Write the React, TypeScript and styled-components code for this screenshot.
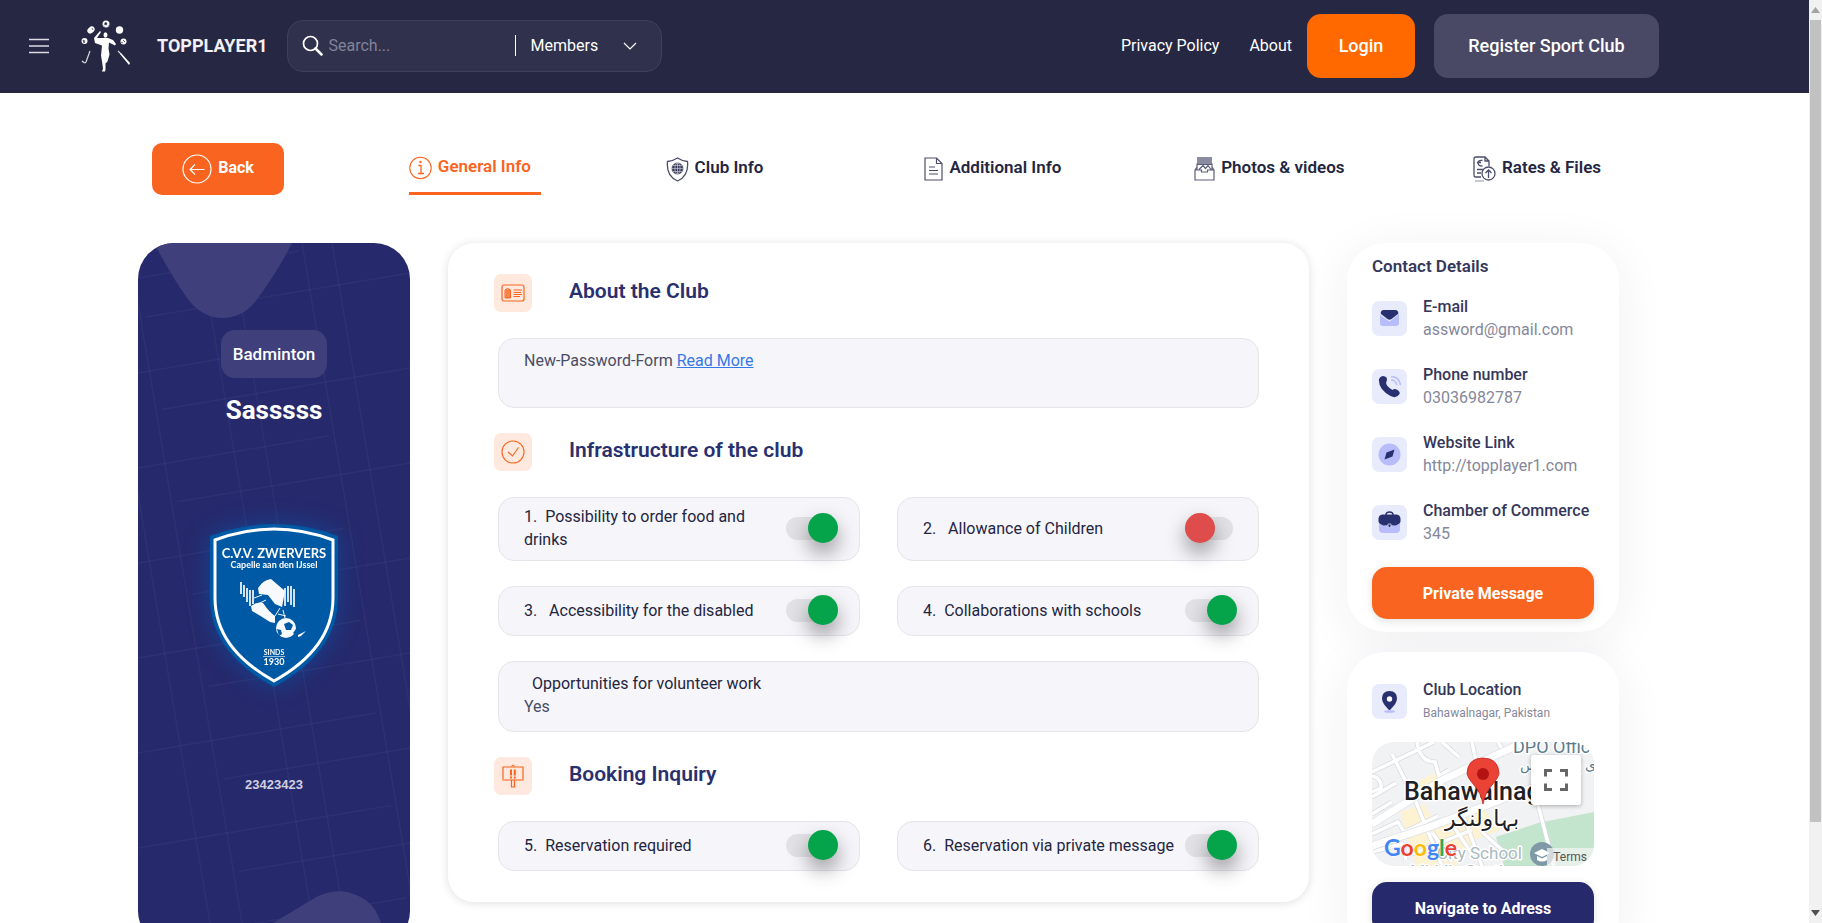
import React, { useId, useState } from "react";
import styled, { createGlobalStyle } from "styled-components";

const GlobalStyle = createGlobalStyle`
  *, *::before, *::after { box-sizing: border-box; }
  body {
    margin: 0;
    background: #fff;
    color: #24253f;
    font-family: Roboto, "Liberation Sans", sans-serif;
    font-size: 16px;
    line-height: 23px;
  }
  button, input, select { font: inherit; color: inherit; }
  h1, h2, h3, p, ul { margin: 0; padding: 0; }
  svg { display: block; flex: none; }
`;

const orange = "#f96420";
const navy = "#26296c";

/* ---------- Frame ---------- */

const Frame = styled.div`
  display: grid;
  grid-template-columns: minmax(0, 1fr) 13px;
  height: 100vh;
`;

const Page = styled.div`
  overflow-x: hidden;
  overflow-y: auto;
  scrollbar-width: none;
`;

const Rail = styled.div`
  display: flex;
  flex-direction: column;
  align-items: center;
  overflow: hidden;
  padding: 6px 0;
  background: #f1f1f1;
`;

const RailThumb = styled.div`
  flex: 0 0 88%;
  width: 11px;
  margin: 6px 0 auto;
  background: #c1c1c1;
`;

/* ---------- Header ---------- */

const Header = styled.header`
  display: flex;
  align-items: center;
  height: 93px;
  padding: 0 150px 2px 28px;
  background: #262743;
  color: #fff;
`;

const IconButton = styled.button`
  display: flex;
  padding: 0;
  border: 0;
  background: none;
  cursor: pointer;
`;

const Brand = styled.a`
  display: flex;
  align-items: center;
  gap: 26px;
  margin: 0 19px 0 31px;
  color: #f3f0f6;
  font-size: 18px;
  font-weight: 700;
  text-decoration: none;
`;

const SearchBox = styled.form`
  display: flex;
  align-items: center;
  width: 375px;
  height: 52px;
  padding: 0 24px 0 14px;
  border: 1px solid #3f405a;
  border-radius: 16px;
  background: #30314c;
`;

const SearchInput = styled.input`
  flex: 1;
  min-width: 0;
  padding: 0 0 0 6px;
  border: 0;
  outline: 0;
  background: none;
  &::placeholder { color: #82839a; opacity: 1; }
`;

const ScopeField = styled.label`
  display: flex;
  align-items: center;
  height: 21px;
  padding-left: 15px;
  border-left: 1px solid #fff;
`;

const ScopeSelect = styled.select`
  width: 92px;
  padding: 0;
  border: 0;
  appearance: none;
  background: none;
  option { color: #262743; }
`;

const Nav = styled.nav`
  display: flex;
  align-items: center;
  margin-left: auto;
`;

const NavLink = styled.a`
  margin-right: 30px;
  color: #fff;
  text-decoration: none;
  &:last-of-type { margin-right: 15px; }
`;

const HeaderButton = styled.button<{ $accent?: boolean }>`
  height: 64px;
  min-width: ${(p) => (p.$accent ? 108 : 225)}px;
  padding: 0 24px;
  border: 0;
  border-radius: 14px;
  background: ${(p) => (p.$accent ? "#ff6900" : "#494965")};
  font-size: 18px;
  font-weight: 500;
  cursor: pointer;
  & + & { margin-left: 19px; }
`;

/* ---------- Tabs ---------- */

const Content = styled.main`
  padding: 50px 190px 0 138px;
`;

const TabBar = styled.nav`
  display: grid;
  grid-template-columns: 257fr 257fr 259fr 270fr 279fr 129fr;
  align-items: center;
  justify-items: start;
  height: 52px;
  margin: 0 14px 48px 14px;
`;

const BackButton = styled.button`
  display: flex;
  align-items: center;
  justify-content: center;
  gap: 6px;
  width: 132px;
  height: 52px;
  padding: 0;
  border: 0;
  border-radius: 10px;
  background: ${orange};
  color: #fff;
  font-weight: 700;
  cursor: pointer;
`;

const TabLabel = styled.span`
  padding-bottom: 3px;
`;

const Tab = styled.a<{ $active?: boolean }>`
  display: flex;
  align-items: center;
  gap: 6px;
  height: 52px;
  min-width: 132px;
  border-bottom: ${(p) => (p.$active ? `3px solid ${orange}` : "0")};
  color: ${(p) => (p.$active ? orange : "#24253f")};
  font-size: 17px;
  font-weight: 600;
  white-space: nowrap;
  text-decoration: none;
`;

/* ---------- Columns ---------- */

const Columns = styled.div`
  display: grid;
  grid-template-columns: 272fr 861fr 272fr;
  gap: 38px;
  align-items: start;
`;

const ClubCard = styled.aside`
  position: relative;
  display: flex;
  flex-direction: column;
  align-items: center;
  min-height: 704px;
  padding-top: 87px;
  overflow: hidden;
  border-radius: 36px;
  background: ${navy};
  color: #fff;
`;

const ClubBackdrop = styled.svg`
  position: absolute;
  top: 0;
  left: 0;
  width: 100%;
  height: 100%;
`;

const SportTag = styled.span`
  position: relative;
  padding: 12px;
  border-radius: 14px;
  background: #3e3f7b;
  font-size: 17px;
  line-height: 24px;
  font-weight: 500;
`;

const ClubName = styled.h1`
  position: relative;
  margin: 16px 0 98px;
  font-size: 26px;
  line-height: 32px;
  font-weight: 700;
`;

const ClubCode = styled.span`
  position: relative;
  margin-top: 88px;
  color: #cfd0e0;
  font-family: "Liberation Sans", sans-serif;
  font-size: 13px;
  line-height: 20px;
  font-weight: 700;
`;

const InfoCard = styled.section`
  padding: 31px 50px 31px 46px;
  border-radius: 26px;
  background: #fff;
  box-shadow: 0 1px 10px rgba(0, 0, 0, 0.13);
`;

const SectionHead = styled.div`
  display: flex;
  align-items: center;
  gap: 37px;
  height: 38px;
  margin-bottom: 26px;
`;

const SectionIcon = styled.span`
  display: grid;
  place-items: center;
  width: 38px;
  height: 38px;
  border-radius: 7px;
  background: #ffe8dd;
`;

const SectionTitle = styled.h2`
  padding-bottom: 4px;
  color: #29306f;
  font-size: 21px;
  line-height: 28px;
  font-weight: 600;
`;

const Panel = styled.div`
  min-height: 70px;
  margin: 0 0 25px 4px;
  padding: 10px 25px 13px;
  border: 1px solid #e4e4eb;
  border-radius: 16px;
  background: #f5f5fa;
  color: #4b4c63;
`;

const PanelLabel = styled.p`
  padding-left: 8px;
  color: #24253f;
`;

const InlineLink = styled.a`
  color: #3579e6;
`;

const OptionGrid = styled.div`
  display: grid;
  grid-template-columns: 1fr 1fr;
  gap: 25px 37px;
  margin: 0 0 25px 4px;
  &:last-child { margin-bottom: 0; }
`;

const Option = styled.label`
  display: flex;
  align-items: center;
  justify-content: space-between;
  min-height: 50px;
  padding: 7px 25px 9px;
  border: 1px solid #e4e4eb;
  border-radius: 16px;
  background: #f5f5fa;
  cursor: pointer;
`;

const OptionText = styled.span`
  max-width: 256px;
  white-space: pre-wrap;
`;

const Toggle = styled.input`
  flex: none;
  display: flex;
  align-items: center;
  width: 48px;
  height: 23px;
  margin: 0;
  appearance: none;
  border-radius: 12px;
  background: #e2e2e6;
  cursor: pointer;
  &::before {
    content: "";
    flex: none;
    width: 30px;
    height: 30px;
    border-radius: 50%;
    background: #de4c4c;
    box-shadow: 0 10px 20px rgba(0, 0, 0, 0.38);
  }
  &:checked::before {
    margin-left: 22px;
    background: #05a44b;
  }
`;

/* ---------- Right column ---------- */

const Side = styled.aside`
  display: grid;
  gap: 20px;
`;

const SideCard = styled.section`
  padding: 11px 25px 13px;
  border-radius: 38px;
  background: #fff;
  box-shadow: 0 8px 50px rgba(40, 40, 70, 0.07);
  & + & { padding: 26px 25px 20px; }
`;

const SideTitle = styled.h2`
  margin-bottom: 17px;
  color: #35375a;
  font-size: 17px;
  line-height: 24px;
  font-weight: 600;
`;

const ContactList = styled.ul`
  display: grid;
  gap: 22px;
  margin-bottom: 22px;
  list-style: none;
`;

const Contact = styled.div`
  display: flex;
  align-items: center;
  gap: 16px;
  height: 46px;
`;

const ContactIcon = styled.span`
  display: grid;
  flex: none;
  place-items: center;
  width: 35px;
  height: 35px;
  border-radius: 7px;
  background: #e8ebfb;
`;

const ContactText = styled.div`
  color: #85879a;
  white-space: nowrap;
`;

const ContactLabel = styled.h3`
  color: #35375a;
  font-size: 16px;
  line-height: 23px;
  font-weight: 500;
`;

const SmallText = styled.p`
  font-size: 12px;
  line-height: 24px;
`;

const WideButton = styled.button<{ $navy?: boolean }>`
  display: block;
  width: 100%;
  height: 52px;
  border: 0;
  border-radius: 15px;
  background: ${(p) => (p.$navy ? navy : orange)};
  box-shadow: 0 2px 8px rgba(0, 0, 0, 0.12);
  color: #fff;
  font-weight: 700;
  cursor: pointer;
`;

const MapFrame = styled.div`
  position: relative;
  height: 124px;
  margin: 18px 0 16px;
  overflow: hidden;
  border-radius: 22px;
`;

const MapArt = styled.svg`
  width: 100%;
  height: 100%;
`;

const FullscreenButton = styled.button`
  position: absolute;
  top: 13px;
  right: 13px;
  display: grid;
  place-items: center;
  width: 50px;
  height: 50px;
  padding: 0;
  border: 0;
  border-radius: 3px;
  background: #fff;
  box-shadow: 0 1px 4px rgba(0, 0, 0, 0.3);
`;

const TermsLink = styled.a`
  position: absolute;
  right: 0;
  bottom: 0;
  padding: 0 7px 0 6px;
  background: rgba(245, 245, 245, 0.7);
  color: #555;
  font-size: 12px;
  line-height: 18px;
  text-decoration: none;
`;

/* ---------- Drawings ---------- */

const LogoArt = () => (
  <svg width="50" height="52" viewBox="0 0 50 52" fill="#fff" aria-hidden="true">
    <circle cx="25" cy="4" r="3.5" />
    <path d="M24 2.500l2 .5-.5 2-2-.5zM22.500 5.500l1 1.500M27 6.500l1-1.500" fill="#262743" stroke="#262743" strokeWidth=".5" />
    <ellipse cx="10" cy="10" rx="4" ry="3" transform="rotate(-40 10 10)" />
    <circle cx="38.500" cy="10" r="3.700" />
    <circle cx="3.500" cy="21" r="3" />
    <circle cx="42.500" cy="21.500" r="3" />
    <path d="M2 20l2 1-1 2zM42 20l2 2M40 22l2 1M11 8l1 2" stroke="#262743" strokeWidth=".7" />
    <ellipse cx="24.500" cy="15" rx="2" ry="2.700" />
    <path d="M13 18l6-7 1 1-4 6 6 0h5l5 2 3 4-1 1.500-6-3-.5 6 1 6-2 7-2 2v6l-.5 2H21l1-3-1-7-1-6 1-10-7-2.500z" />
    <path d="M9 31L5 42q-1 2-4-1M37 31l3 3" fill="none" stroke="#d9d9e2" strokeWidth="1.200" />
    <path d="M39 34l1-1 9 10-1 2z" />
  </svg>
);

const MenuIcon = () => (
  <svg width="22" height="16" viewBox="0 0 22 16" stroke="#dcdce4" strokeWidth="1.500" aria-hidden="true">
    <path d="M1 1.500h20M1 8h20M1 14.500h20" />
  </svg>
);

const SearchIcon = () => (
  <svg width="21" height="21" viewBox="0 0 21 21" fill="none" stroke="#fff" aria-hidden="true">
    <circle cx="8.500" cy="8.500" r="7" strokeWidth="1.700" />
    <path d="M13.500 13.500L19.500 19.500" strokeWidth="2.500" strokeLinecap="round" />
  </svg>
);

const ChevronIcon = () => (
  <svg width="14" height="8" viewBox="0 0 14 8" fill="none" stroke="#fff" strokeWidth="1.200" aria-hidden="true">
    <path d="M1 1l6 6 6-6" />
  </svg>
);

const RailArrow = ({ down }: { down?: boolean }) => (
  <svg width="9" height="8" viewBox="0 0 9 8" fill={down ? "#505050" : "#a3a3a3"} aria-hidden="true">
    <path d={down ? "M0 1h9L4.500 7z" : "M0 7h9L4.500 1z"} />
  </svg>
);

const BackIcon = () => (
  <svg width="30" height="30" viewBox="0 0 30 30" fill="none" stroke="#fff" strokeWidth="1.200" aria-hidden="true">
    <circle cx="15" cy="15" r="14" />
    <path d="M22.500 15.500H8M13 10.500l-5 5 5 5" />
  </svg>
);

const InfoIcon = () => (
  <svg width="23" height="24" viewBox="0 0 23 24" fill="none" stroke={orange} aria-hidden="true">
    <circle cx="11.500" cy="12" r="10.700" strokeWidth="1.100" />
    <path d="M9.500 9.500h2.500v8M9 17.500h6" strokeWidth="1.300" />
    <circle cx="11.500" cy="6" r="1.200" fill={orange} stroke="none" />
  </svg>
);

const ShieldIcon = () => (
  <svg width="23" height="25" viewBox="0 0 23 25" fill="none" stroke="#4c4d68" aria-hidden="true">
    <path d="M11.500 1Q16 4 21.500 4.500 23 19 11.500 24 0 19 1.500 4.500 7 4 11.500 1z" strokeWidth="1.300" />
    <circle cx="11.500" cy="11.500" r="5.500" fill="#3b3c5c" strokeWidth=".8" />
    <path d="M6 11.500h11M11.500 6v11M7 8.500h9M7 14.500h9" stroke="#c4c5d3" strokeWidth=".7" />
    <ellipse cx="11.500" cy="11.500" rx="2.600" ry="5.500" stroke="#c4c5d3" strokeWidth=".7" />
  </svg>
);

const DocIcon = () => (
  <svg width="19" height="24" viewBox="0 0 19 24" fill="none" stroke="#4c4d68" strokeWidth="1.200" aria-hidden="true">
    <path d="M1 1h11.500L18 6.500V23H1zM12.500 1v5.500H18M5 10h6M5 13.500h9M5 17h9" />
  </svg>
);

const PhotoIcon = () => (
  <svg width="21" height="24" viewBox="0 0 21 24" fill="none" stroke="#5d5e77" strokeWidth="1.200" aria-hidden="true">
    <path d="M3 0h15v7H3z" fill="#8b8c9f" stroke="none" />
    <path d="M3 6.500v6.500M18 6.500v6.500M3 7.500h15M1 13h6.500v2h6v-2H20v10H1zM1 13l2-3M20 13l-2-3M5 12.500l4-4 2.500 3L14 8.500l3 4" />
  </svg>
);

const RatesIcon = () => (
  <svg width="23" height="26" viewBox="0 0 23 26" fill="none" stroke="#4c4d68" strokeWidth="1.300" aria-hidden="true">
    <path d="M8 21H2.500Q1 21 1 19V3Q1 1 3 1h9l4 4v5M12 1v4h4" />
    <path d="M9.500 4.500Q5 4 5 7t4.500 3M4 6.500h4M4 13.500h6M4 17h4" />
    <circle cx="15.500" cy="17.500" r="6.500" fill="#fff" />
    <path d="M15.500 22v-8M12.500 17l3-3 3 3" />
    <path d="M2 25h9" stroke="#a9aab9" />
  </svg>
);

const AboutIcon = () => (
  <svg width="24" height="18" viewBox="0 0 24 18" fill="none" stroke={orange} aria-hidden="true">
    <rect x="1" y="1" width="22" height="16" rx="2" strokeWidth="1.200" />
    <path d="M4 6Q6.500 3 9.500 6v8H4z" fill="#fba27a" />
    <path d="M6 6v8M8 6v8M12.500 6H21M12.500 8.500H20M12.500 10.500H21M12.500 12.500H19" />
  </svg>
);

const CheckIcon = () => (
  <svg width="24" height="24" viewBox="0 0 24 24" fill="none" stroke={orange} strokeWidth="1.100" aria-hidden="true">
    <circle cx="12" cy="12" r="11" />
    <path d="M7 12l4.500 4L17.500 7.500" />
  </svg>
);

const SignIcon = () => (
  <svg width="22" height="24" viewBox="0 0 22 24" fill="none" stroke={orange} strokeWidth="1.200" aria-hidden="true">
    <path d="M1 3h20v13H1z" />
    <path d="M1 16h20" stroke="#fba27a" strokeWidth="2" />
    <path d="M9.500 2.500Q11 0 12.500 2.500M9.500 16v7h3v-7" />
    <path d="M9 5.500v6M12.800 5.500v6M9 12.500v2M12.800 12.500v2" strokeWidth="2" />
  </svg>
);

const Glyph = ({ kind }: { kind: string }) => (
  <svg width="23" height="23" viewBox="0 0 23 23" aria-hidden="true">
    {kind === "mail" && (
      <>
        <path d="M2 8q0-2 2-2h15q2 0 2 2v8q0 3-3 3H5q-3 0-3-3z" fill="#b9bcfb" />
        <path d="M3 3h17v5l-8.500 6.500L2 8z" fill="#e8ebfb" />
        <path d="M5 3h13q3 1 2 4l-6.500 5q-2 1.500-4 0L3 7q-1-3 2-4z" fill="#29306f" />
      </>
    )}
    {kind === "phone" && (
      <>
        <path d="M1 4q2-4 6-2.500 3 1 1.500 5Q7.500 8.500 9.500 11t5 4q2-2 5 0t2 4q-3 5-9 2Q0 14 1 4z" fill="#29306f" />
        <path d="M13 1.500q8 0 9.500 8.500M13 5q4.500 0 6 5" fill="none" stroke="#b9bcfb" strokeWidth="1.600" />
      </>
    )}
    {kind === "web" && (
      <>
        <circle cx="11.500" cy="11.500" r="11" fill="#b9bcfb" />
        <path d="M16.500 6.500l-2 7-8 3 2-7z" fill="#29306f" />
      </>
    )}
    {kind === "case" && (
      <>
        <path d="M1 10h21v8q0 4-4 4H5q-4 0-4-4z" fill="#b9bcfb" />
        <path d="M8 4q0-3 3.500-3T15 4" fill="none" stroke="#29306f" strokeWidth="1.500" />
        <path d="M5 3.500h13q4 0 4.500 4v3q0 2-5 4l-6-.5-6 .5q-5-2-5-4v-3q.5-4 4.500-4z" fill="#29306f" />
        <path d="M10 13h3v2.500l-1.500 1L10 15.500z" fill="#29306f" stroke="#d5d8fb" strokeWidth=".8" />
      </>
    )}
    {kind === "pin" && (
      <>
        <ellipse cx="11.500" cy="21.500" rx="5.500" ry="1.300" fill="#b9bcfb" />
        <path d="M11.500 1q7.500 0 7.500 7.500 0 4.500-6.500 11-1 1-2 0Q4 13 4 8.500 4 1 11.500 1z" fill="#29306f" />
        <circle cx="11.500" cy="9" r="2.700" fill="#fff" />
      </>
    )}
  </svg>
);

const steep = [-145, -113, -42, -10, 61, 93, 164, 194];
const rows = [0, 1, 2, 3, 4, 5, 6, 7];

const Backdrop = () => (
  <ClubBackdrop viewBox="0 0 272 704" preserveAspectRatio="none" aria-hidden="true">
    <g stroke="#fff" strokeOpacity=".04" strokeWidth="1.500">
      {steep.map((x) => (
        <line key={x} x1={x} y1="0" x2={x + 118} y2="704" />
      ))}
      {rows.map((i) => (
        <line key={i} x1="0" y1={35 + 95 * i} x2={160 + 15.5 * i} y2={8 + 92.4 * i} />
      ))}
      {rows.map((i) => (
        <line key={i} x1={8 + 15.5 * i} y1={74 + 92.4 * i} x2="272" y2={30 + 95 * i} />
      ))}
    </g>
    <g fill="#3e3f7b">
      <path d="M16 0Q34 34 49 55 64 75 84 75 104 75 117 59 139 30 154 0z" />
      <path d="M110 704L135 680 175 656Q188 648 203 648 236 652 244 683L248 704z" />
    </g>
  </ClubBackdrop>
);

const CrestGlow = styled.svg`
  position: relative;
  filter: drop-shadow(0 0 12px rgba(0, 100, 190, 0.45));
`;

const Crest = () => (
  <CrestGlow width="128" height="163" viewBox="0 0 128 163" role="img" aria-label="Club crest">
    <path d="M0 12Q64-12 128 12V74Q128 128 64 163 0 128 0 74z" fill="#0059a5" />
    <path d="M5 16Q64-6 123 16V74Q123 124 64 157 5 124 5 74z" fill="none" stroke="#fff" strokeWidth="3" />
    <g fill="#fff" fontFamily="Lato, sans-serif" fontWeight="700" textAnchor="middle">
      <text x="64" y="34" fontSize="13">C.V.V. ZWERVERS</text>
      <text x="64" y="44" fontSize="9">Capelle aan den IJssel</text>
      <text x="64" y="131" fontSize="7">SINDS</text>
      <text x="64" y="141" fontSize="9">1930</text>
    </g>
    <path d="M53 132.500h22" stroke="#fff" strokeWidth=".6" />
    <g fill="#f7f9fd">
      <path d="M48 64q5-8 13-9l14 12-3 16-7-3-7-9-9-1z" />
      <path d="M41 82q6-5 12-3 7 10 12 13v7l-5-1q-9-6-18-11z" />
      <circle cx="76" cy="104" r="10" />
      <path d="M88 111l8-4-5 5-3 1z" />
    </g>
    <path d="M31 58v12M34 61v12M37 64v14M40 66v16M43 66v14M75 64v18M78 62v16M81 62v19M84 65v18" stroke="#f7f9fd" strokeWidth="1.700" />
    <path d="M44 74l8-3M48 80l8-4M65 92l5-8M68 90l8 2M73 86l2 8" stroke="#f7f9fd" strokeWidth="1" />
    <path d="M74 100l5-2 4 3-2 5-5 0zM67 105l4 1 1 4-3 2zM83 109l3-4v6z" fill="#0059a5" />
  </CrestGlow>
);

const streets =
  "M0 30L62 0M20 12L44 60 70 124M45 0q3 20 18 20l4 14 10-6M70 0L87 15M0 55l24-14M0 34q10 2 9 12l-9 4M160 40l22 84M90 70l20 54M110 90l20 18M0 72l20-12M0 110l30-8 4 16M0 92l26-12 6 10 34-16M100 0l4 20M126 0l8 14M60 90l20 30M80 82l20 30M40 112l60-24";

const MapDrawing = () => (
  <MapArt viewBox="0 0 222 124" preserveAspectRatio="xMidYMid slice" role="img" aria-label="Map of Bahawalnagar">
    <rect width="222" height="124" fill="#f1f2f4" />
    <path d="M124 95l42-14 56-11v54h-90z" fill="#c3e5cd" />
    <path d="M37 43l29-13 6 15-22 10zM28 70l24-8 28 46-10 16H44zM60 82l50-18 18 24-26 10-18 26H70z" fill="#fdf3d3" />
    <path d={streets} fill="none" stroke="#d9dbe0" strokeWidth="5" />
    <path d={streets} fill="none" stroke="#fff" strokeWidth="3.500" />
    <path d="M0 82L70 38 148 2M0 104L60 84 160 46" fill="none" stroke="#dfe1e5" strokeWidth="8.500" />
    <path d="M0 82L70 38 148 2M0 104L60 84 160 46" fill="none" stroke="#fff" strokeWidth="7" />
    <g fontFamily="Roboto, 'Noto Sans', 'DejaVu Sans', sans-serif" stroke="#fff" strokeWidth="3" paintOrder="stroke" strokeLinejoin="round">
      <g fill="#5e7d8b">
        <text x="141" y="11" fontSize="18">DPO Office</text>
        <text x="148" y="28" fontSize="14">ڈی پی او آفس</text>
      </g>
      <g fill="#202124" fontWeight="500">
        <text x="32" y="58" fontSize="25">Bahawalnagar</text>
        <text x="110" y="84" fontSize="22" fontWeight="400" textAnchor="middle">بہاولنگر</text>
      </g>
      <g fill="#a9b9c2">
        <text x="65" y="117" fontSize="17">City School</text>
        <text x="38" y="135" fontSize="17">Middle Section</text>
      </g>
    </g>
    <circle cx="170" cy="112" r="12" fill="#7f9aa6" />
    <path d="M162 111l8-4 8 4-8 4zM165 114v4q5 3 10 0v-4l-5 2.500z" fill="#fff" />
    <path d="M111 62q-2-11-9-19-7-8-7-12 1-15 16-15t16 15q0 4-7 12-7 8-9 19z" fill="#ea4335" stroke="#c5221f" strokeWidth=".8" />
    <circle cx="111" cy="32" r="6" fill="#b31412" />
    <text x="12" y="114" fontFamily="Lato, sans-serif" fontSize="23" fontWeight="700" stroke="#fff" strokeWidth="1" paintOrder="stroke">
      <tspan fill="#4285f4">G</tspan>
      <tspan fill="#ea4335">o</tspan>
      <tspan fill="#fbbc04">o</tspan>
      <tspan fill="#4285f4">g</tspan>
      <tspan fill="#34a853">l</tspan>
      <tspan fill="#ea4335">e</tspan>
    </text>
  </MapArt>
);

/* ---------- Parts ---------- */

const Setting = ({ text, on }: { text: string; on?: boolean }) => {
  const id = useId();
  const [checked, setChecked] = useState(!!on);
  return (
    <Option htmlFor={id}>
      <OptionText>{text}</OptionText>
      <Toggle id={id} type="checkbox" checked={checked} onChange={() => setChecked(!checked)} />
    </Option>
  );
};

const Heading = ({ icon, children }: { icon: React.ReactNode; children: string }) => (
  <SectionHead>
    <SectionIcon>{icon}</SectionIcon>
    <SectionTitle>{children}</SectionTitle>
  </SectionHead>
);

const tabs = [
  { label: "General Info", icon: <InfoIcon />, active: true },
  { label: "Club Info", icon: <ShieldIcon /> },
  { label: "Additional Info", icon: <DocIcon /> },
  { label: "Photos & videos", icon: <PhotoIcon /> },
  { label: "Rates & Files", icon: <RatesIcon /> },
];

const contacts = [
  { kind: "mail", label: "E-mail", value: "assword@gmail.com" },
  { kind: "phone", label: "Phone number", value: "03036982787" },
  { kind: "web", label: "Website Link", value: "http://topplayer1.com" },
  { kind: "case", label: "Chamber of Commerce", value: "345" },
];

export default function App() {
  return (
    <Frame>
      <GlobalStyle />
      <Page>
        <Header>
          <IconButton type="button" aria-label="Menu">
            <MenuIcon />
          </IconButton>
          <Brand href="#">
            <LogoArt />
            TOPPLAYER1
          </Brand>
          <SearchBox>
            <SearchIcon />
            <SearchInput type="text" placeholder="Search..." aria-label="Search" />
            <ScopeField>
              <ScopeSelect aria-label="Search in">
                <option>Members</option>
                <option>Clubs</option>
              </ScopeSelect>
              <ChevronIcon />
            </ScopeField>
          </SearchBox>
          <Nav>
            <NavLink href="#">Privacy Policy</NavLink>
            <NavLink href="#">About</NavLink>
            <HeaderButton type="button" $accent>Login</HeaderButton>
            <HeaderButton type="button">Register Sport Club</HeaderButton>
          </Nav>
        </Header>

        <Content>
          <TabBar>
            <BackButton type="button">
              <BackIcon />
              <TabLabel>Back</TabLabel>
            </BackButton>
            {tabs.map((t) => (
              <Tab key={t.label} href="#" $active={t.active}>
                {t.icon}
                <TabLabel>{t.label}</TabLabel>
              </Tab>
            ))}
          </TabBar>

          <Columns>
            <ClubCard>
              <Backdrop />
              <SportTag>Badminton</SportTag>
              <ClubName>Sasssss</ClubName>
              <Crest />
              <ClubCode>23423423</ClubCode>
            </ClubCard>

            <InfoCard>
              <Heading icon={<AboutIcon />}>About the Club</Heading>
              <Panel>
                New-Password-Form <InlineLink href="#">Read More</InlineLink>
              </Panel>

              <Heading icon={<CheckIcon />}>Infrastructure of the club</Heading>
              <OptionGrid>
                <Setting text={"1.  Possibility to order food and drinks"} on />
                <Setting text={"2.   Allowance of Children"} />
                <Setting text={"3.   Accessibility for the disabled"} on />
                <Setting text={"4.  Collaborations with schools"} on />
              </OptionGrid>
              <Panel>
                <PanelLabel>Opportunities for volunteer work</PanelLabel>
                <p>Yes</p>
              </Panel>

              <Heading icon={<SignIcon />}>Booking Inquiry</Heading>
              <OptionGrid>
                <Setting text={"5.  Reservation required"} on />
                <Setting text={"6.  Reservation via private message"} on />
              </OptionGrid>
            </InfoCard>

            <Side>
              <SideCard>
                <SideTitle>Contact Details</SideTitle>
                <ContactList>
                  {contacts.map((c) => (
                    <li key={c.label}>
                      <Contact>
                        <ContactIcon>
                          <Glyph kind={c.kind} />
                        </ContactIcon>
                        <ContactText>
                          <ContactLabel>{c.label}</ContactLabel>
                          <p>{c.value}</p>
                        </ContactText>
                      </Contact>
                    </li>
                  ))}
                </ContactList>
                <WideButton type="button">Private Message</WideButton>
              </SideCard>
              <SideCard>
                <Contact>
                  <ContactIcon>
                    <Glyph kind="pin" />
                  </ContactIcon>
                  <ContactText>
                    <ContactLabel>Club Location</ContactLabel>
                    <SmallText>Bahawalnagar, Pakistan</SmallText>
                  </ContactText>
                </Contact>
                <MapFrame>
                  <MapDrawing />
                  <FullscreenButton type="button" aria-label="Toggle fullscreen view">
                    <svg width="24" height="22" viewBox="0 0 24 22" fill="none" stroke="#666" strokeWidth="3" aria-hidden="true">
                      <path d="M1.500 7.500v-6H8M16 1.500h6.500v6M22.500 14.500v6H16M8 20.500H1.500v-6" />
                    </svg>
                  </FullscreenButton>
                  <TermsLink href="#">Terms</TermsLink>
                </MapFrame>
                <WideButton type="button" $navy>Navigate to Adress</WideButton>
              </SideCard>
            </Side>
          </Columns>
        </Content>
      </Page>
      <Rail aria-hidden="true">
        <RailArrow />
        <RailThumb />
        <RailArrow down />
      </Rail>
    </Frame>
  );
}
